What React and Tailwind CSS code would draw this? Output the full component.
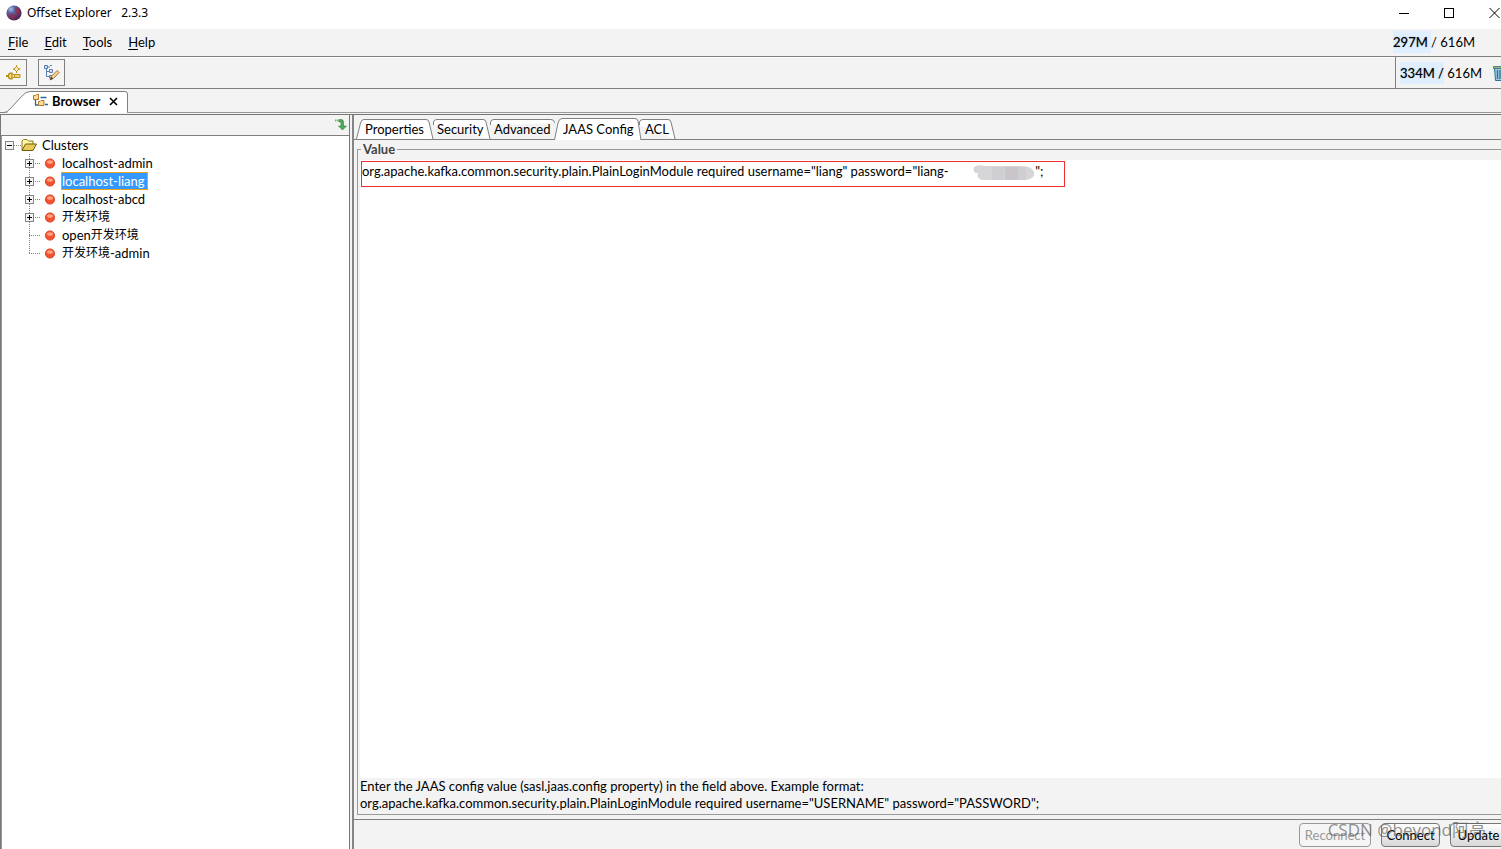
const ui = "font-['Lato','Noto_Sans_CJK_SC',sans-serif]";

function AppLogo() {
  return (
    <svg width="16" height="16" viewBox="0 0 16 16" aria-hidden="true">
      <defs>
        <radialGradient id="orb" cx="0.3" cy="0.25" r="0.85">
          <stop offset="0" stopColor="#b3bfe0" />
          <stop offset="0.3" stopColor="#5567a8" />
          <stop offset="0.65" stopColor="#6d3464" />
          <stop offset="1" stopColor="#3b2350" />
        </radialGradient>
      </defs>
      <circle cx="8" cy="8" r="7.6" fill="url(#orb)" />
      <path d="M9 3c3 0 5 2 5.500 5-1 1-3 1-4 0S8 5 9 3zM4 9c2-1 4 0 4.500 2 0 2-1 3-2 3-2-1-3-3-2.500-5z" fill="#a02840" opacity="0.65" />
    </svg>
  );
}

function ConnectIcon() {
  return (
    <svg width="16" height="16" viewBox="0 0 16 16" fill="none" stroke="#b8901c" aria-hidden="true">
      <path d="M11.500 1.500l2.500 2.500-2.500 2.500L9 4z" fill="#fff3b0" />
      <path d="M11.500 0v2M11.500 6v2M8 4h2M13 4h2.500" />
      <path d="M1 11h2" strokeWidth="2" />
      <path d="M7 8.200H5.500C4 8.200 3.500 9.500 3.500 11s.5 2.800 2 2.800H7z" fill="#ffe27a" strokeWidth="1.400" />
      <path d="M7.500 9.500h2.500M7.500 12.500h2.500" strokeWidth="1.200" />
      <path d="M9.500 9.500h5.500v3H9.500z" fill="#f0d67c" />
    </svg>
  );
}

function EditTreeIcon() {
  return (
    <svg width="16" height="17" viewBox="0 0 16 17" fill="none" aria-hidden="true">
      <g stroke="#5b7fb5">
        <path d="M.5 1.500h3v3h-3zM5.500 5.500h3v3h-3zM5.500 11.500h2.500v2.500H5.500z" fill="#cfe0f5" />
        <path d="M2.500 5v7.500H5M2.500 7.500H5M6 1.500h2M4 3h2" />
      </g>
      <path d="M6 16l1.200-3.500L13 6.500l2.300 2L9.500 14.500z" fill="#f1cf8e" stroke="#9b6a2c" strokeWidth="0.800" />
      <path d="M6 16l1.200-3.200 2 1.800z" fill="#3d3a55" />
    </svg>
  );
}

function BrowserIcon() {
  return (
    <svg width="16" height="14" viewBox="0 0 16 14" fill="none" aria-hidden="true">
      <path d="M2.500 6v5h3M7.500 3.500h6M12 10.500h3" stroke="#2769a4" strokeWidth="1.300" />
      <path d="M.5 1.500h2l1-1h2v5h-5zM5.500 7.500h1.500l1-1H11v5H5.500z" fill="#fbdc9a" stroke="#b27a22" />
    </svg>
  );
}

function FolderIcon() {
  return (
    <svg width="16" height="14" viewBox="0 0 16 14" aria-hidden="true">
      <path d="M1 12V3l1.500-1.500H6L7.500 3H12v3" fill="#fff6a8" stroke="#8d7a10" />
      <path d="M1 12.500L4.500 6h11L12 12.500z" fill="#e8c95c" stroke="#6f5c08" />
    </svg>
  );
}

function DownArrowIcon() {
  return (
    <svg width="12" height="12" viewBox="0 0 12 12" aria-hidden="true">
      <path d="M0 1.500h4" stroke="#6cb86c" strokeWidth="2" strokeDasharray="1.500 .7" />
      <path d="M4 .5h2.500Q8.500.5 8.500 3v4h3L7.500 11 3.500 7H6V3H4z" fill="#4cab55" stroke="#2c7f3c" strokeWidth="0.600" />
    </svg>
  );
}

function TrashIcon() {
  return (
    <svg className="shrink-0" width="14" height="16" viewBox="0 0 14 16" aria-hidden="true">
      <path d="M1.500 3h11l-1 12.500h-9z" fill="#9cc9dc" stroke="#2d7093" />
      <path d="M4.500 5v9M7 5v9M9.500 5v9" stroke="#2f7597" strokeWidth="1.300" />
      <path d="M.5 1.500h13v2H.5z" fill="#9dc06a" stroke="#2d6b88" strokeWidth="0.800" />
    </svg>
  );
}

function StatusDot() {
  return (
    <svg width="12" height="14" viewBox="0 0 12 14" aria-hidden="true">
      <circle cx="6" cy="7.500" r="4.600" fill="#f4512c" stroke="#d9482f" />
      <ellipse cx="6" cy="6" rx="3" ry="1.800" fill="#ffb59a" opacity="0.8" />
    </svg>
  );
}

function TreeBox({ open }) {
  return (
    <svg width="9" height="9" viewBox="0 0 9 9" shapeRendering="crispEdges" aria-hidden="true">
      <rect x="0.5" y="0.5" width="8" height="8" fill="#f4f4f4" stroke="#858585" />
      <path d={open ? "M2 4.500h5" : "M2 4.500h5M4.500 2v5"} stroke="#000" />
    </svg>
  );
}

function Branch({ last, box }) {
  return (
    <svg width="20" height="18" viewBox="0 0 20 18" shapeRendering="crispEdges" aria-hidden="true">
      <path d={last ? "M5.500 0v9" : "M5.500 0v18"} stroke="#808080" strokeDasharray="1 1" />
      <path d="M5 9.500h12" stroke="#808080" strokeDasharray="1 1" />
      {box && (
        <g>
          <rect x="1.5" y="5.5" width="8" height="8" fill="#f4f4f4" stroke="#858585" />
          <path d="M3 9.500h5M5.500 7v5" stroke="#000" />
        </g>
      )}
    </svg>
  );
}

const menus = [["F", "ile"], ["E", "dit"], ["T", "ools"], ["H", "elp"]];

const nodes = [
  { label: "localhost-admin", box: true },
  { label: "localhost-liang", box: true, selected: true },
  { label: "localhost-abcd", box: true },
  { cjk: "开发环境", box: true },
  { label: "open", cjk: "开发环境" },
  { cjk: "开发环境", tail: "-admin", last: true },
];

const tabs = [
  { label: "Properties", size: "w-[76px] pl-2", d: "M-.5 20L3.500 4Q4.500.5 7 .5H69Q71.500.5 72 3L76 20" },
  { label: "Security", size: "w-[57px] pl-1", d: "M.5 6V3Q1 .5 4 .5H50Q52.500.5 53 3L57 20" },
  { label: "Advanced", size: "w-[65px] pl-1", d: "M.5 6V3Q1 .5 4 .5H61Q64.500.5 64.500 4" },
  { label: "JAAS Config", size: "w-[84px] pl-2", d: "M-.5 21L3 4Q4-.5 7-.5H80Q82.500-.5 83 2L86 21" },
  { label: "ACL", size: "w-9 pl-1.5", d: "M.5 6V3Q1 .5 4 .5H29Q31.500.5 32 3L36 20" },
];

const maskedGap = "\u00a0".repeat(26);
const jaas = `org.apache.kafka.common.security.plain.PlainLoginModule required username="liang" password="liang-${maskedGap}";`;

export default function App() {
  return (
    <div className={`flex h-screen flex-col overflow-hidden bg-[#f3f3f3] text-[13px] leading-[18px] text-black ${ui}`}>
      <header className="flex h-[29px] shrink-0 items-center bg-white pb-1 pl-1.5 font-['Noto_Sans',sans-serif] text-xs">
        <AppLogo />
        <h1 className="ml-[5px] whitespace-pre">Offset Explorer   2.3.3</h1>
        <div className="ml-auto mr-px flex items-center gap-[35px]">
          <button aria-label="Minimize">
            <svg width="10" height="10" viewBox="0 0 10 10" stroke="#000" shapeRendering="crispEdges"><path d="M0 5.500h10" /></svg>
          </button>
          <button aria-label="Maximize">
            <svg width="10" height="10" viewBox="0 0 10 10" fill="none" stroke="#000" shapeRendering="crispEdges"><path d="M.5.5h9v9h-9z" /></svg>
          </button>
          <button aria-label="Close">
            <svg width="11" height="10" viewBox="0 0 11 10" stroke="#000"><path d="M.5 0l10 10M10.500 0l-10 10" /></svg>
          </button>
        </div>
      </header>

      <nav className="flex h-7 shrink-0 items-center gap-4 border-b border-[#808080] pb-0.5 pl-2 pr-[26px]">
        {menus.map(([k, rest]) => (
          <button key={k}><span className="underline underline-offset-2">{k}</span>{rest}</button>
        ))}
        <div className="ml-auto flex h-[22px] items-center">
          <span className="flex h-full items-center bg-[#dfefff]"><span className="[text-shadow:0_0_1px_#0008]">297M</span>&nbsp;</span>/ 616M
        </div>
      </nav>

      <div className="flex h-8 shrink-0 items-stretch border-b border-[#808080]">
        <div className="flex flex-1 items-center gap-[11px] shadow-[inset_0_1px_0_#fff]">
          <button aria-label="Add connection" className="flex h-[27px] w-[27px] items-center justify-center border border-l-0 border-[#808080] bg-[#f5f5f5]"><ConnectIcon /></button>
          <button aria-label="Edit connection" className="flex h-[27px] w-[27px] items-center justify-center border border-[#808080] bg-[#f5f5f5]"><EditTreeIcon /></button>
        </div>
        <div className="-mr-1.5 flex items-center border-l border-[#808080] pl-1">
          <span className="flex h-[22px] items-center bg-[#dfefff] [text-shadow:0_0_1px_#0008]">334M /</span>
          <span>&nbsp;616M</span>
          <button aria-label="Free memory" className="ml-[11px]"><TrashIcon /></button>
        </div>
      </div>

      <div className="flex h-6 shrink-0 items-end border-b border-[#999]">
        <div className="relative -mb-px flex h-[22px] w-32 items-center pb-0.5 pl-[33px]">
          <svg className="absolute inset-0" width="128" height="22" viewBox="0 0 128 22" aria-hidden="true">
            <path d="M0 21.500h4Q7 21.500 10 18L22 5Q26 .5 30 .5H125Q127.500.5 127.500 3V21.500" fill="#fff" stroke="#808080" />
            <path d="M8 21.500H127" stroke="#fff" />
          </svg>
          <button className="relative flex items-center gap-[3px] font-bold"><BrowserIcon />Browser</button>
          <button aria-label="Close tab" className="relative ml-[9px]">
            <svg width="9" height="9" viewBox="0 0 9 9" stroke="#000" strokeWidth="1.600"><path d="M1 1l7 7M8 1L1 8" /></svg>
          </button>
        </div>
      </div>

      <main className="mt-px flex min-h-0 flex-1 border-t border-[#777]">
        <aside className="flex w-[350px] shrink-0 flex-col border-x border-[#777]">
          <div className="flex h-[21px] shrink-0 items-center justify-end border-b border-[#808080] pr-0.5">
            <button aria-label="Scroll to selection"><DownArrowIcon /></button>
          </div>
          <div className="flex-1 border-l border-[#999] bg-white">
            <div className="flex h-[18px] items-center pl-[3px]">
              <TreeBox open />
              <svg width="7" height="9" viewBox="0 0 7 9" shapeRendering="crispEdges" aria-hidden="true"><path d="M0 4.500h7" stroke="#808080" strokeDasharray="1 1" /></svg>
              <FolderIcon />
              <span className="ml-[5px]">Clusters</span>
            </div>
            <ul className="pl-[22px]">
              {nodes.map((n, i) => (
                <li key={i} className="flex h-[18px] items-center">
                  <Branch last={n.last} box={n.box} />
                  <StatusDot />
                  <span className={n.selected ? "ml-[5px] flex h-[18px] items-center border border-[#f0a020] bg-[#3399ff] pr-0.5 leading-4 text-white" : "ml-[5px] flex h-[18px] items-center border border-transparent leading-4"}>
                    {n.label}
                    {n.cjk && <span className="text-xs leading-[18px]">{n.cjk}</span>}
                    {n.tail}
                  </span>
                </li>
              ))}
            </ul>
          </div>
        </aside>

        <section className="ml-0.5 flex min-w-0 flex-1 flex-col border-l-2 border-[#858585]">
          <div className="flex h-[25px] shrink-0 items-end border-b border-[#808080] pl-[3px]">
            {tabs.map((t) => (
              <button key={t.label} className={`relative flex h-5 items-center text-left ${t.size}`}>
                <svg className="absolute inset-0 overflow-visible" width="20" height="20" aria-hidden="true">
                  <path d={t.d} fill="#fff" stroke="#808080" />
                </svg>
                <span className="relative whitespace-nowrap">{t.label}</span>
              </button>
            ))}
          </div>
          <div className="flex min-h-0 flex-1 flex-col border-b border-[#808080] pb-1 pl-[3px]">
            <fieldset className="flex min-h-0 min-w-0 flex-1 flex-col border border-r-0 border-[#999] pl-0.5">
              <legend className="ml-px px-0.5 font-bold text-[#444]">Value</legend>
              <div className="relative mt-0.5 min-h-0 flex-1">
                <textarea
                  aria-label="JAAS config value"
                  spellCheck="false"
                  className="block h-full w-full resize-none bg-white px-0.5 py-0.5 outline-none"
                  defaultValue={jaas}
                />
                <div className="pointer-events-none absolute left-px top-px h-[26px] w-[704px] border border-[#f03030]" />
                <svg className="pointer-events-none absolute left-[612px] top-1" width="64" height="17" viewBox="0 0 64 17" aria-hidden="true">
                  <path d="M2 3Q6 0 12 2H50Q60 2 62 8T54 16H10Q4 14 6 9Q0 9 2 3z" fill="#d6d6d8" />
                  <path d="M20 3h12v13H20zM46 3h8v13h-8z" fill="#cfced3" />
                  <path d="M33 3h13v13H33z" fill="#c9c5c8" />
                </svg>
              </div>
              <p className="h-9 shrink-0 leading-[17px]">
                Enter the JAAS config value (sasl.jaas.config property) in the field above. Example format:
                <br />
                org.apache.kafka.common.security.plain.PlainLoginModule required username="USERNAME" password="PASSWORD";
              </p>
            </fieldset>
          </div>
          <footer className="relative -mr-1.5 flex h-[29px] shrink-0 items-center justify-end gap-[10px]">
            <button disabled className="h-6 w-[72px] rounded-sm border border-[#999] bg-[#f5f5f5] text-[#999]">Reconnect</button>
            <button className="h-6 w-[59px] rounded-sm border border-[#777] bg-linear-to-b from-white to-[#d8d8d8]">Connect</button>
            <button className="h-6 w-[57px] rounded-sm border border-[#777] bg-linear-to-b from-white to-[#d8d8d8]">Update</button>
            <span className="pointer-events-none absolute right-[21px] top-0 font-['Open_Sans','Noto_Sans_CJK_SC',sans-serif] text-[17px] leading-5 text-[#606060]/70">CSDN @beyond阿亮</span>
          </footer>
        </section>
      </main>
    </div>
  );
}
